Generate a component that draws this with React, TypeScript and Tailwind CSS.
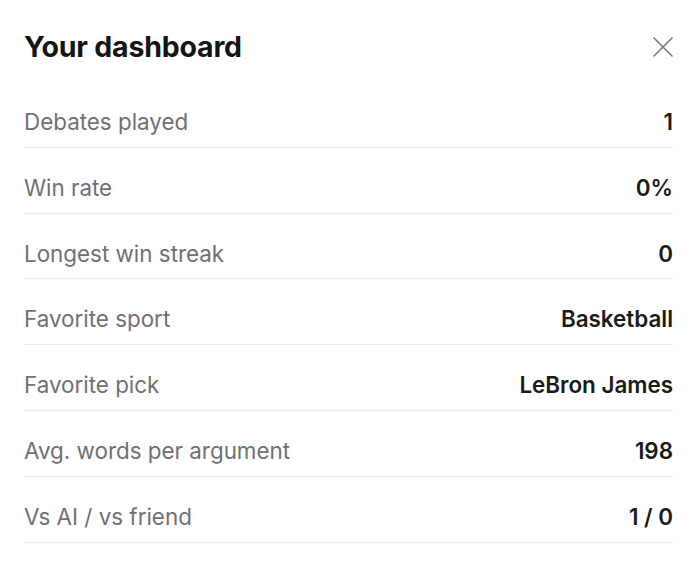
import React from "react";

const stats = [
  { label: "Debates played", value: "1" },
  { label: "Win rate", value: "0%" },
  { label: "Longest win streak", value: "0" },
  { label: "Favorite sport", value: "Basketball" },
  { label: "Favorite pick", value: "LeBron James" },
  { label: "Avg. words per argument", value: "198" },
  { label: "Vs AI / vs friend", value: "1 / 0" },
];

export default function App() {
  return (
    <div
      className="w-[694px] h-[570px] bg-white overflow-hidden"
      style={{ fontFamily: "Inter, 'Noto Sans', sans-serif" }}
    >
      <div className="pl-6 pr-[21px]">
        {/* header */}
        <div className="flex items-center justify-between h-[82px] pt-3">
          <h1 className="text-[28.5px] leading-9 font-bold text-[#141414] tracking-[-0.2px]">
            Your dashboard
          </h1>
          <button className="w-5 h-5 flex items-center justify-center">
            <svg width="20" height="20" viewBox="0 0 20 20" fill="none">
              <path
                d="M1 1L19 19M19 1L1 19"
                stroke="#7a7a7e"
                strokeWidth="1.6"
                strokeLinecap="round"
              />
            </svg>
          </button>
        </div>

        {/* stats list */}
        <div>
          {stats.map((s) => (
            <div
              key={s.label}
              className="flex items-center justify-between h-[65.8px] pt-[15px] border-b border-[#ebebeb]"
            >
              <span className="text-[22.4px] text-[#707075]">{s.label}</span>
              <span className="text-[22.4px] font-semibold text-[#1a1a1a]">
                {s.value}
              </span>
            </div>
          ))}
        </div>
      </div>
    </div>
  );
}
